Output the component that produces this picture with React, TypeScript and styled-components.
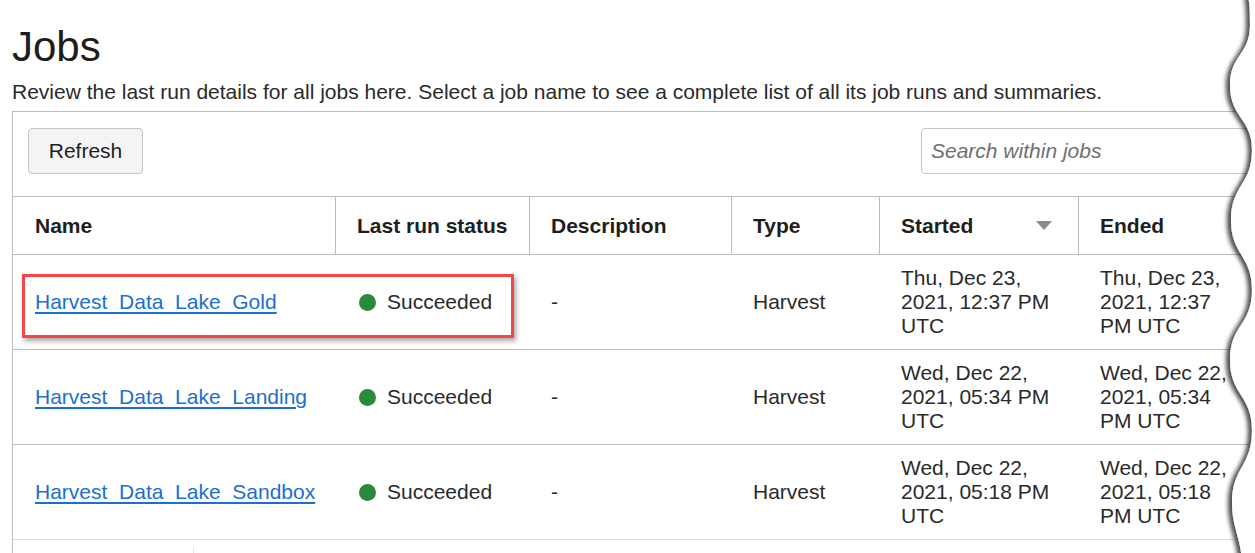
import React from "react";
import styled, { createGlobalStyle } from "styled-components";

const GlobalStyle = createGlobalStyle`
  html, body {
    margin: 0;
    padding: 0;
    background: #ffffff;
    overflow: hidden;
  }
  body {
    font-family: "Liberation Sans", Arial, sans-serif;
    color: #1f1f1f;
  }
`;

const Page = styled.div`
  position: relative;
  width: 1255px;
  height: 553px;
  overflow: hidden;
  padding-left: 12px;
  box-sizing: border-box;
`;

const Title = styled.h1`
  margin: 0;
  padding-top: 23px;
  font-size: 42px;
  line-height: 48px;
  font-weight: 400;
  color: #1d1d1d;
`;

const Subtitle = styled.p`
  margin: 9px 0 7px 0;
  font-size: 21px;
  line-height: 24px;
  color: #2a2a2a;
  white-space: nowrap;
`;

const Panel = styled.div`
  width: 1320px;
  border: 1px solid #b9bdc4;
  border-right: none;
  border-bottom: none;
`;

const Toolbar = styled.div`
  display: flex;
  align-items: center;
  padding: 16px 0 22px 15px;
  border-bottom: 1px solid #b9bdc4;
`;

const Button = styled.button`
  flex-shrink: 0;
  width: 115px;
  height: 46px;
  background: #f4f4f5;
  border: 1px solid #c3c6cc;
  border-radius: 4px;
  font-family: "Liberation Sans", Arial, sans-serif;
  font-size: 21px;
  color: #1f1f1f;
  padding: 0;
`;

const Search = styled.input`
  flex-shrink: 0;
  margin-left: 778px;
  width: 360px;
  height: 46px;
  box-sizing: border-box;
  border: 1px solid #c3c6cc;
  border-radius: 4px;
  padding: 0 9px;
  font-family: "Liberation Sans", Arial, sans-serif;
  font-size: 21px;
  &::placeholder {
    color: #6f6f6f;
    font-style: italic;
  }
`;

const Row = styled.div<{ $head?: boolean; $light?: boolean }>`
  display: grid;
  grid-template-columns: 322px 194px 202px 148px 199px 180px;
  min-height: ${(p) => (p.$head ? "57px" : "94px")};
  border-bottom: 1px solid ${(p) => (p.$light ? "#dedfe2" : "#b9bdc4")};
`;

const HeadCell = styled.div<{ $first?: boolean }>`
  display: flex;
  align-items: center;
  justify-content: space-between;
  padding: 0 26px 0 ${(p) => (p.$first ? "22px" : "21px")};
  border-left: ${(p) => (p.$first ? "none" : "1px solid #b9bdc4")};
  font-size: 21px;
  font-weight: 700;
  color: #1e1e1e;
  white-space: nowrap;
`;

const Cell = styled.div<{ $first?: boolean }>`
  display: flex;
  align-items: center;
  padding: 11px 22px 11px ${(p) => (p.$first ? "22px" : "21px")};
  border-left: ${(p) => (p.$first ? "none" : "1px solid transparent")};
  font-size: 21px;
  line-height: 24px;
  color: #2a2a2a;
`;

const JobLink = styled.a`
  color: #1b6fd0;
  text-decoration: underline;
  text-underline-offset: 3px;
`;

const Dot = styled.span`
  display: inline-block;
  width: 17px;
  height: 17px;
  border-radius: 50%;
  background: #2a8a3b;
  margin: 0 11px 0 2px;
  flex-shrink: 0;
`;

const SortArrow = styled.span`
  width: 0;
  height: 0;
  border-left: 8px solid transparent;
  border-right: 8px solid transparent;
  border-top: 9px solid #8b8b8b;
`;

const Footer = styled.div`
  height: 20px;
  padding-top: 7px;
  box-sizing: border-box;
`;

const FooterPart = styled.div`
  width: 180px;
  height: 100%;
  border-right: 1px solid #dedfe2;
`;

const Highlight = styled.div`
  position: absolute;
  left: 22px;
  top: 274px;
  width: 492px;
  height: 64px;
  box-sizing: border-box;
  border: 3px solid #f0474b;
  box-shadow: 2px 3px 5px rgba(0, 0, 0, 0.35);
  pointer-events: none;
`;

const TornEdge = styled.svg`
  position: absolute;
  right: 0;
  top: 0;
  width: 40px;
  height: 553px;
  overflow: visible;
`;

const jobs = [
  {
    name: "Harvest_Data_Lake_Gold",
    started: "Thu, Dec 23, 2021, 12:37 PM UTC",
    ended: "Thu, Dec 23, 2021, 12:37 PM UTC",
  },
  {
    name: "Harvest_Data_Lake_Landing",
    started: "Wed, Dec 22, 2021, 05:34 PM UTC",
    ended: "Wed, Dec 22, 2021, 05:34 PM UTC",
  },
  {
    name: "Harvest_Data_Lake_Sandbox",
    started: "Wed, Dec 22, 2021, 05:18 PM UTC",
    ended: "Wed, Dec 22, 2021, 05:18 PM UTC",
  },
];

export default function App() {
  return (
    <Page>
      <GlobalStyle />
      <Title>Jobs</Title>
      <Subtitle>
        Review the last run details for all jobs here. Select a job name to see a
        complete list of all its job runs and summaries.
      </Subtitle>
      <Panel>
        <Toolbar>
          <Button>Refresh</Button>
          <Search placeholder="Search within jobs" />
        </Toolbar>
        <Row $head>
          <HeadCell $first>Name</HeadCell>
          <HeadCell>Last run status</HeadCell>
          <HeadCell>Description</HeadCell>
          <HeadCell>Type</HeadCell>
          <HeadCell>
            Started
            <SortArrow />
          </HeadCell>
          <HeadCell>Ended</HeadCell>
        </Row>
        {jobs.map((job, i) => (
          <Row key={job.name} $light={i === jobs.length - 1}>
            <Cell $first>
              <JobLink href="#">{job.name}</JobLink>
            </Cell>
            <Cell>
              <Dot />
              Succeeded
            </Cell>
            <Cell>-</Cell>
            <Cell>Harvest</Cell>
            <Cell>{job.started}</Cell>
            <Cell>{job.ended}</Cell>
          </Row>
        ))}
        <Footer>
          <FooterPart />
        </Footer>
      </Panel>
      <Highlight />
      <TornEdge viewBox="0 0 40 553">
        <defs>
          <filter id="tornShadow" x="-50%" y="-5%" width="200%" height="110%">
            <feDropShadow dx="-4" dy="1" stdDeviation="2.2" floodColor="#000" floodOpacity="0.7" />
          </filter>
        </defs>
        <path
          filter="url(#tornShadow)"
          fill="#ffffff"
          d="M32,-10 C35,5 35,10 35,25 C35,55 15,55 15,85 C15,118 37,118 37,150 C37,185 16,185 16,220 C16,255 37,255 37,290 C37,325 15,325 15,360 C15,395 37,395 37,430 C37,467 17,467 17,503 C17,528 27,540 27,565 L60,565 L60,-10 Z"
        />
      </TornEdge>
    </Page>
  );
}
